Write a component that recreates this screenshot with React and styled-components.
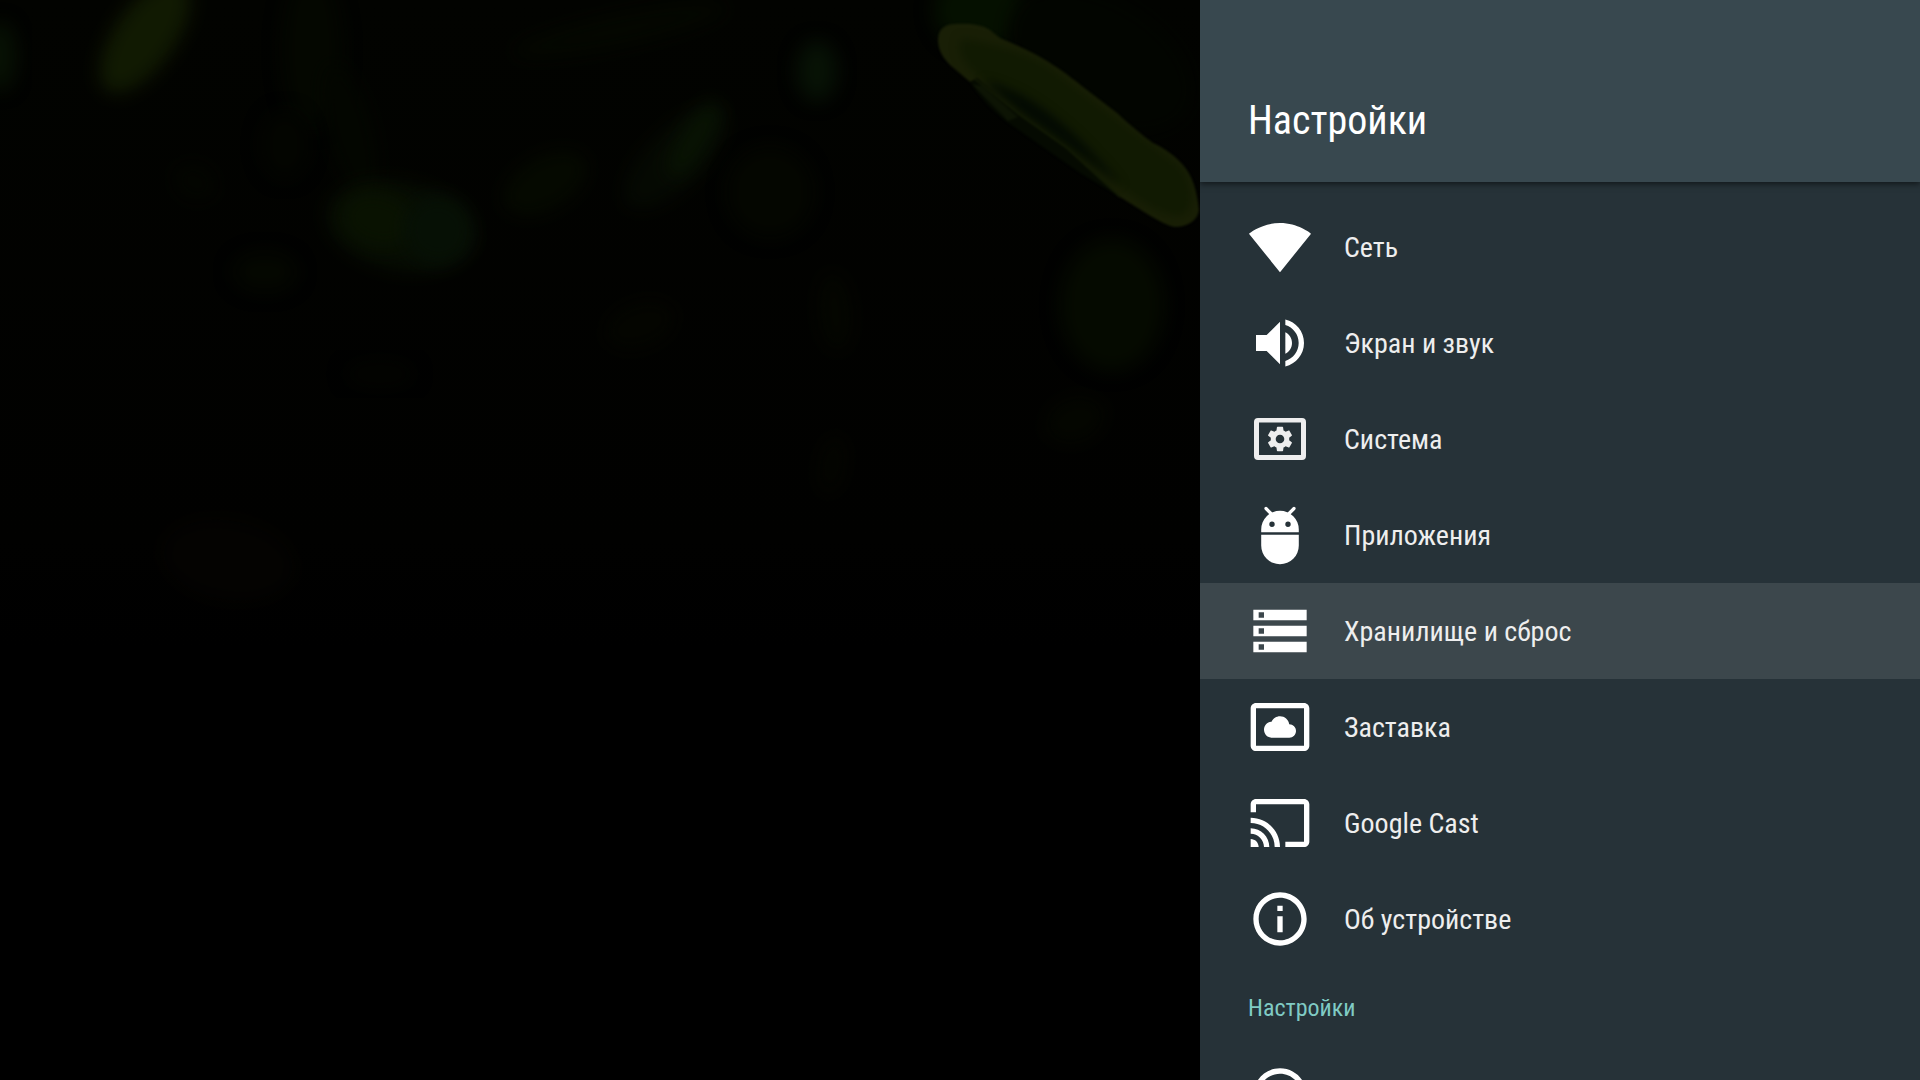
import React, { useState } from "react";
import styled, { createGlobalStyle } from "styled-components";

const GlobalStyle = createGlobalStyle`
  * {
    box-sizing: border-box;
  }

  body {
    margin: 0;
    background: #000;
    font-family: "Roboto Condensed", Roboto, sans-serif;
  }
`

const Screen = styled.div`
  display: grid;
  grid-template-columns: minmax(0, 5fr) minmax(0, 3fr);
  height: 100vh;
  overflow: hidden;
  background: #000;
`

const Backdrop = styled.div`
  min-height: 0;
  overflow: hidden;
`

const BackdropArt = styled.svg`
  display: block;
  width: 100%;
  height: 100%;
`

const Panel = styled.aside`
  display: flex;
  flex-direction: column;
  min-height: 0;
  overflow: hidden;
  background: #263238;
`

const Header = styled.header`
  flex: none;
  padding: 97px 48px 37px;
  background: #38484f;
  box-shadow: 0 2px 6px rgba(0, 0, 0, 0.55);
`

const Title = styled.h1`
  margin: 0;
  color: #fff;
  font-size: 40px;
  font-weight: 400;
  line-height: 48px;
`

const Menu = styled.nav`
  flex: 1;
  min-height: 0;
  overflow: hidden;
  padding-top: 17px;
`

const MenuList = styled.ul`
  margin: 0;
  padding: 0;
  list-style: none;
`

const MenuButton = styled.button`
  display: flex;
  align-items: center;
  gap: 32px;
  width: 100%;
  height: 96px;
  padding: 0 48px;
  border: 0;
  outline: none;
  background: ${(props) => (props.$active ? "#3c474c" : "transparent")};
  color: #eee;
  font-family: inherit;
  font-size: 28px;
  line-height: 32px;
  text-align: left;
  cursor: pointer;
`

const MenuLabel = styled.span`
  padding-top: 2px;
`

const SectionTitle = styled.h2`
  margin: 0;
  padding: 25px 48px 23px;
  color: #80cbc4;
  font-size: 24px;
  font-weight: 400;
  line-height: 32px;
`

const IconSvg = styled.svg`
  flex: none;
  width: 64px;
  height: 64px;
  fill: ${(props) => (props.$dim ? "#eee" : "#fff")};
`

const GEAR =
  "M19.43 12.98c.04-.32.07-.64.07-.98s-.03-.66-.07-.98l2.11-1.65c.19-.15.24-.42.12-.64l-2-3.46c-.12-.22-.39-.3-.61-.22l-2.49 1c-.52-.4-1.08-.73-1.69-.98l-.38-2.65C14.46 2.18 14.25 2 14 2h-4c-.25 0-.46.18-.49.42l-.38 2.65c-.61.25-1.17.59-1.69.98l-2.49-1c-.23-.09-.49 0-.61.22l-2 3.46c-.13.22-.07.49.12.64l2.11 1.65c-.04.32-.07.65-.07.98s.03.66.07.98l-2.11 1.65c-.19.15-.24.42-.12.64l2 3.46c.12.22.39.3.61.22l2.49-1c.52.4 1.08.73 1.69.98l.38 2.65c.03.24.24.42.49.42h4c.25 0 .46-.18.49-.42l.38-2.65c.61-.25 1.17-.59 1.69-.98l2.49 1c.23.09.49 0 .61-.22l2-3.46c.12-.22.07-.49-.12-.64l-2.11-1.65zM12 15.5c-1.93 0-3.5-1.57-3.5-3.5s1.57-3.5 3.5-3.5 3.5 1.57 3.5 3.5-1.57 3.5-3.5 3.5z"

const icons = {
  network: "M12.01 21.49L23.64 7c-.45-.34-4.93-4-11.64-4C5.28 3 .81 6.66.36 7l11.63 14.49.01.01.01-.01z",
  sound: "M3 9v6h4l5 5V4L7 9H3zm13.5 3c0-1.77-1.02-3.29-2.5-4.03v8.05c1.48-.73 2.5-2.25 2.5-4.02zM14 3.23v2.06c2.89.86 5 3.54 5 6.71s-2.11 5.85-5 6.71v2.06c4.01-.91 7-4.49 7-8.77s-2.99-7.86-7-8.77z",
  storage: "M2 20h20v-4H2v4zm2-3h2v2H4v-2zM2 4v4h20V4H2zm4 3H4V5h2v2zm-4 7h20v-4H2v4zm2-3h2v2H4v-2z",
  daydream: "M9 16h6.5c1.38 0 2.5-1.12 2.5-2.5S16.88 11 15.5 11h-.05c-.24-1.69-1.69-3-3.45-3-1.4 0-2.6.83-3.16 2.02h-.16C7.17 10.18 6 11.45 6 13c0 1.66 1.34 3 3 3zM21 3H3c-1.1 0-2 .9-2 2v14c0 1.1.9 2 2 2h18c1.1 0 2-.9 2-2V5c0-1.1-.9-2-2-2zm0 16.01H3V4.99h18v14.02z",
  cast: "M21 3H3c-1.1 0-2 .9-2 2v3h2V5h18v14h-7v2h7c1.1 0 2-.9 2-2V5c0-1.1-.9-2-2-2zM1 18v3h3c0-1.66-1.34-3-3-3zm0-4v2c2.76 0 5 2.24 5 5h2c0-3.87-3.13-7-7-7zm0-4v2c4.97 0 9 4.03 9 9h2c0-6.08-4.93-11-11-11z",
  info: "M11 17h2v-6h-2v6zm1-15C6.48 2 2 6.48 2 12s4.48 10 10 10 10-4.48 10-10S17.52 2 12 2zm0 18c-4.41 0-8-3.59-8-8s3.59-8 8-8 8 3.59 8 8-3.59 8-8 8zM11 9h2V7h-2v2z",
}

const Icon = ({ name }) => {
  if (name === "system") {
    return (
      <IconSvg viewBox="0 0 64 64" $dim aria-hidden="true">
        <path
          fillRule="evenodd"
          d="M10 11h44a4 4 0 0 1 4 4v34a4 4 0 0 1-4 4H10a4 4 0 0 1-4-4V15a4 4 0 0 1 4-4zm1 4.500v32.500h42V15.500z"
        />
        <path transform="translate(17.240 17.240) scale(1.230)" d={GEAR} />
      </IconSvg>
    );
  }

  if (name === "apps") {
    return (
      <IconSvg viewBox="0 0 64 64" aria-hidden="true">
        <path d="M18 5.500l6 6M46 5.500l-6 6" stroke="#fff" strokeWidth="3.200" strokeLinecap="round" />
        <path
          fillRule="evenodd"
          d="M13.200 29.300v-2.800a18.800 18.800 0 0 1 37.600 0v2.800zM24 18.600a2.700 2.700 0 1 0 0 5.400 2.700 2.700 0 0 0 0-5.400zM40 18.600a2.700 2.700 0 1 0 0 5.400 2.700 2.700 0 0 0 0-5.400z"
        />
        <path d="M13.200 31.800h37.600v10.700a18.800 18.800 0 0 1-37.600 0z" />
      </IconSvg>
    );
  }

  return (
    <IconSvg viewBox="0 0 24 24" aria-hidden="true">
      <path d={icons[name]} />
    </IconSvg>
  );
};

// out of focus leaves: x, y, rx, ry, angle, color
const leaves = [
  [145, 36, 66, 30, -55, "#111a02"],
  [0, 56, 16, 34, 0, "#071103"],
  [312, 50, 30, 80, 0, "#040700"],
  [350, 130, 22, 70, -15, "#030600"],
  [400, 226, 74, 44, 12, "#060c02"],
  [378, 220, 38, 28, 15, "#091201"],
  [438, 230, 34, 34, 20, "#061005"],
  [285, 145, 24, 34, 0, "#030500"],
  [265, 272, 32, 20, 0, "#040700"],
  [195, 182, 22, 18, 30, "#030500"],
  [545, 183, 46, 26, -30, "#050900"],
  [380, 374, 34, 12, 0, "#030400"],
  [620, 30, 110, 16, -12, "#040700"],
  [675, 158, 66, 28, -45, "#050902"],
  [694, 140, 44, 14, -58, "#081303"],
  [817, 71, 20, 30, 0, "#071205"],
  [770, 192, 44, 46, 0, "#040600"],
  [640, 325, 36, 22, -20, "#040500"],
  [835, 312, 16, 40, -5, "#040600"],
  [832, 465, 12, 30, 10, "#040500"],
  [1112, 305, 52, 66, 0, "#050a00"],
  [1075, 420, 30, 22, -20, "#040600"],
  [980, 10, 46, 40, 0, "#051000"],
  [1100, 60, 100, 60, 30, "#020500"],
  [228, 560, 66, 40, 10, "#040301"],
]

const Wallpaper = () => (
  <BackdropArt viewBox="0 0 1200 1080" preserveAspectRatio="xMidYMin slice" aria-hidden="true">
    <defs>
      <filter id="haze" x="-50%" y="-50%" width="200%" height="200%" colorInterpolationFilters="sRGB">
        <feGaussianBlur stdDeviation="9" />
      </filter>
      <filter id="soft" x="-10%" y="-10%" width="120%" height="120%" colorInterpolationFilters="sRGB">
        <feGaussianBlur stdDeviation="1" />
      </filter>
      <filter id="inner" x="-20%" y="-20%" width="140%" height="140%" colorInterpolationFilters="sRGB">
        <feGaussianBlur stdDeviation="5" />
      </filter>
      <linearGradient id="night" x1="0" y1="0" x2="0" y2="1">
        <stop offset="0" stopColor="#020300" />
        <stop offset="0.500" stopColor="#010100" />
        <stop offset="0.600" stopColor="#000" />
      </linearGradient>
      <clipPath id="leafShape">
        <path d="M938 40C938 30 944 24 955 24C967 23 982 24 990 30L1000 38C1020 46 1042 57 1053 65C1066 73 1078 83 1087 90L1117 113C1130 125 1142 135 1153 143C1166 149 1176 157 1183 165C1192 175 1197 190 1199 210C1198 220 1188 227 1175 227C1162 225 1140 209 1120 197C1104 181 1086 164 1067 148L1020 115L977 78L970 82L950 65C943 58 938 50 938 40Z" />
      </clipPath>
    </defs>
    <rect width="1200" height="1080" fill="url(#night)" />
    {leaves.map(([x, y, rx, ry, angle, color]) => (
      <ellipse
        key={`${x}-${y}`}
        cx={x}
        cy={y}
        rx={rx}
        ry={ry}
        fill={color}
        filter="url(#haze)"
        transform={`rotate(${angle} ${x} ${y})`}
      />
    ))}
    <g filter="url(#soft)">
      <path d="M970 82C980 98 993 111 1007 122L1080 173L1120 197L1067 148L1020 115L977 78Z" fill="#050a01" />
      <path d="M972 84L1008 121L1018 117L982 86Z" fill="#0d1404" />
      <g clipPath="url(#leafShape)">
        <rect x="930" y="15" width="275" height="220" fill="#191f06" />
        <path
          d="M962 38C980 42 1010 46 1046 64L1114 116L1180 166C1194 184 1196 204 1184 216C1165 218 1140 203 1116 184L1060 142L976 74C960 60 956 46 962 38Z"
          fill="#111a02"
          filter="url(#inner)"
        />
        <path d="M982 80C1030 92 1070 124 1122 186L1066 145L1020 112Z" fill="#030a02" filter="url(#inner)" />
      </g>
      <path d="M975 79L1020 115L1067 148L1120 197" fill="none" stroke="#121a04" strokeWidth="2" />
    </g>
  </BackdropArt>
);

const items = [
  { id: "network", label: "Сеть" },
  { id: "sound", label: "Экран и звук" },
  { id: "system", label: "Система" },
  { id: "apps", label: "Приложения" },
  { id: "storage", label: "Хранилище и сброс" },
  { id: "daydream", label: "Заставка" },
  { id: "cast", label: "Google Cast" },
  { id: "info", label: "Об устройстве" },
]

export default function App() {
  const [active, setActive] = useState("storage");

  return (
    <Screen>
      <GlobalStyle />
      <Backdrop>
        <Wallpaper />
      </Backdrop>
      <Panel>
        <Header>
          <Title>Настройки</Title>
        </Header>
        <Menu aria-label="Настройки">
          <MenuList>
            {items.map((item) => (
              <li key={item.id}>
                <MenuButton
                  type="button"
                  $active={active === item.id}
                  onClick={() => setActive(item.id)}
                >
                  <Icon name={item.id} />
                  <MenuLabel>{item.label}</MenuLabel>
                </MenuButton>
              </li>
            ))}
          </MenuList>
          <SectionTitle>Настройки</SectionTitle>
          <MenuButton type="button" aria-label="Сведения">
            <Icon name="info" />
          </MenuButton>
        </Menu>
      </Panel>
    </Screen>
  );
}
